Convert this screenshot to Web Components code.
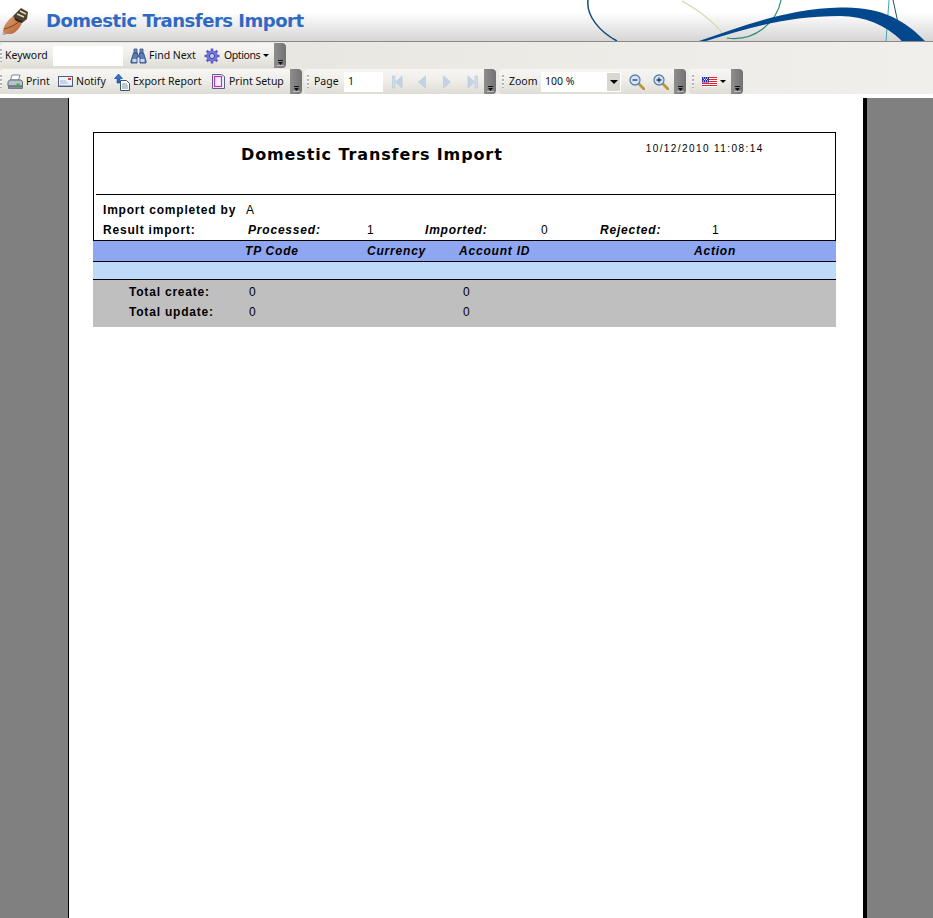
<!DOCTYPE html>
<html><head><meta charset="utf-8">
<style>
html,body{margin:0;padding:0;height:100%;overflow:hidden;background:#fff}
body{display:flex;flex-direction:column;height:918px;font-family:"Noto Sans","Liberation Sans",sans-serif}
</style></head><body>
<app-banner>Domestic Transfers Import</app-banner>
<tool-panel>
  <tool-row>
    <tool-strip grip style="--dx:0px">
      <tb-label style="margin-left:5px;width:48px">Keyword</tb-label>
      <tb-input style="width:70px"></tb-input>
      <tb-button icon="bino" style="margin-left:7px;width:74px;--gap:2px">Find Next</tb-button>
      <tb-button icon="gear" menu style="width:70px;--gap:4px;--cm:-1px;--ls:-.4px">Options</tb-button>
    </tool-strip>
  </tool-row>
  <tool-row>
    <tool-strip grip style="--dx:0px">
      <tb-button icon="printer" style="margin-left:7px;width:51px;--gap:3px">Print</tb-button>
      <tb-button icon="notify" style="width:56px;--gap:3px">Notify</tb-button>
      <tb-button icon="export" style="width:98px;--gap:2px">Export Report</tb-button>
      <tb-button icon="setup" style="width:78px;--gap:4px">Print Setup</tb-button>
    </tool-strip>
    <tool-strip grip style="margin-left:2px">
      <tb-label style="margin-left:10px;width:30px">Page</tb-label>
      <tb-input value="1" style="width:39px"></tb-input>
      <tb-button icon="first" style="margin-left:9px;width:26px"></tb-button>
      <tb-button icon="prev" style="width:25px"></tb-button>
      <tb-button icon="next" style="width:24px"></tb-button>
      <tb-button icon="last" style="width:17px"></tb-button>
    </tool-strip>
    <tool-strip grip style="margin-left:3px">
      <tb-label style="margin-left:10px;width:32px">Zoom</tb-label>
      <tb-select value="100 %" style="width:80px"></tb-select>
      <tb-button icon="zoomout" style="margin-left:8px;width:24px"></tb-button>
      <tb-button icon="zoomin" style="width:21px"></tb-button>
    </tool-strip>
    <tool-strip grip style="margin-left:3px">
      <tb-button icon="flag" menu style="margin-left:13px;width:29px;--gap:4px;--cm:-1px"></tb-button>
    </tool-strip>
  </tool-row>
</tool-panel>
<report-viewer>
  <report-doc></report-doc>
</report-viewer>

<script>
const ICONS={
bino:`<svg width="17" height="16" viewBox="0 0 17 16"><path d="M4 1h3v4H4zM10 1h3v4h-3z" fill="#6f86b8" stroke="#33507f" stroke-width=".8"/><path d="M3.500 5h4v2h2V5h4l2.500 8v2h-6V9h-3v6h-6v-2z" fill="#5f7db8" stroke="#2c4a80" stroke-width=".9"/><path d="M2.500 11h4v3h-4zM10.500 11h4v3h-4z" fill="#c8d6ee"/></svg>`,
gear:`<svg width="16" height="16" viewBox="0 0 16 16"><g fill="#5c5fc4"><circle cx="8" cy="8" r="5.600"/><g stroke="#5c5fc4" stroke-width="2.600"><path d="M8 .5v15M.5 8h15M2.700 2.700l10.600 10.600M13.300 2.700L2.700 13.300"/></g></g><circle cx="8" cy="8" r="5" fill="#7478d8"/><circle cx="8" cy="8" r="2.600" fill="#c6c8f0" stroke="#3f41a0"/></svg>`,
printer:`<svg width="16" height="16" viewBox="0 0 16 16"><path d="M5 1h8l-1.500 5h-8z" fill="#fff" stroke="#6b7a8a" stroke-width=".9"/><path d="M1 7.500L3 6h11l1.500 1.500V12H1z" fill="#b9c2cc" stroke="#566573" stroke-width=".9"/><path d="M1.500 12h14v2.500h-14z" fill="#7f8d9b" stroke="#4a5866" stroke-width=".6"/><rect x="9.500" y="9.500" width="3" height="2" fill="#1ec81e"/></svg>`,
notify:`<svg width="15" height="12" viewBox="0 0 15 12"><rect x=".5" y=".5" width="14" height="10" fill="#eef2f9" stroke="#4d5f88"/><rect x="10" y="2" width="3" height="2" fill="#e03a2e"/><path d="M2 5h6M2 7h8" stroke="#a3b2cc"/><path d="M1 9.500h13" stroke="#9fb2d4"/></svg>`,
export:`<svg width="17" height="18" viewBox="0 0 17 18"><path d="M4.500 1L8.500 5.500H6V10H3V5.500H.5z" fill="#2a72d8" stroke="#123f88" stroke-width=".6"/><path d="M6.500 7.500h6l3 3v7h-9z" fill="#fff" stroke="#3d5273"/><path d="M8 11h5M8 13h6M8 15h6" stroke="#7d8ea8"/></svg>`,
setup:`<svg width="13" height="15" viewBox="0 0 13 15"><path d="M.5.5h9l3 2v12H.5z" fill="#f4f4ff" stroke="#5b5e8a"/><rect x="2.500" y="2.500" width="7" height="10" fill="none" stroke="#c22fb8" stroke-width="1.200"/></svg>`,
first:`<svg width="11" height="14" viewBox="0 0 11 14"><rect x=".5" y="1" width="2.500" height="12" fill="#cfdbe9" stroke="#b5c8dc" stroke-width=".6"/><path d="M10 1v12L3.500 7z" fill="#c3d3e4" stroke="#b5c8dc" stroke-width=".6"/></svg>`,
prev:`<svg width="8" height="14" viewBox="0 0 8 14"><path d="M7.500 1v12L.5 7z" fill="#c3d3e4" stroke="#b5c8dc" stroke-width=".6"/></svg>`,
next:`<svg width="8" height="14" viewBox="0 0 8 14"><path d="M.5 1v12L7.500 7z" fill="#c3d3e4" stroke="#b5c8dc" stroke-width=".6"/></svg>`,
last:`<svg width="11" height="14" viewBox="0 0 11 14"><rect x="8" y="1" width="2.500" height="12" fill="#cfdbe9" stroke="#b5c8dc" stroke-width=".6"/><path d="M1 1v12L7.500 7z" fill="#c3d3e4" stroke="#b5c8dc" stroke-width=".6"/></svg>`,
zoomout:`<svg width="16" height="16" viewBox="0 0 16 16"><path d="M9.500 9.500L15 15" stroke="#b8953a" stroke-width="2.600" stroke-linecap="round"/><circle cx="6" cy="6" r="5" fill="#d7e6f5" stroke="#5a80ac" stroke-width="1.300"/><path d="M3.500 6h5" stroke="#1d3a66" stroke-width="1.300"/></svg>`,
zoomin:`<svg width="16" height="16" viewBox="0 0 16 16"><path d="M9.500 9.500L15 15" stroke="#b8953a" stroke-width="2.600" stroke-linecap="round"/><circle cx="6" cy="6" r="5" fill="#d7e6f5" stroke="#5a80ac" stroke-width="1.300"/><path d="M3.500 6h5M6 3.500v5" stroke="#1d3a66" stroke-width="1.300"/></svg>`,
flag:`<svg width="15" height="10" viewBox="0 0 15 10"><rect width="15" height="10" fill="#fff"/><path d="M0 .5h15M0 2.500h15M0 4.500h15M0 6.500h15M0 8.500h15" stroke="#e8202a"/><rect width="7" height="5.500" fill="#2a2fa8"/><path d="M1 1h1M3 1h1M5 1h1M2 2.500h1M4 2.500h1M1 4h1M3 4h1M5 4h1" stroke="#fff"/></svg>`
};
function def(name,html){
  customElements.define(name,class extends HTMLElement{
    connectedCallback(){
      if(this.shadowRoot)return;
      const r=this.attachShadow({mode:'open'});
      r.innerHTML=typeof html==='function'?html(this):html;
    }
  });
}
def('app-banner',`<style>
:host{display:flex;flex:none;height:41px;align-items:center;position:relative;overflow:hidden;background:linear-gradient(#fff 0,#fff 12px,#d6d6d6 100%);border-bottom:1px solid #8a8a8a}
.logo{flex:none;margin-left:1px;width:29px;height:29px;align-self:flex-start;margin-top:7px}
.t{margin-left:16px;font:bold 18px/24px "DejaVu Sans",sans-serif;color:#2f69c3;letter-spacing:-.48px;white-space:nowrap;margin-top:1px}
.art{position:absolute;left:560px;top:0}
</style>
<svg class="logo" viewBox="0 0 29 29">
<defs><linearGradient id="h" x1="0" y1="0" x2="1" y2="1"><stop offset="0" stop-color="#e0a078"/><stop offset="1" stop-color="#b4602f"/></linearGradient></defs>
<path d="M2 25C2 19 6 14 12 9L21 15C20 20 15 26 10 27L4 27z" fill="url(#h)"/>
<path d="M3 22C8 21 14 18 19 14" stroke="#7d4322" fill="none"/>
<path d="M12 9L20 1l7 4-1 7-5 4-6-2z" fill="#4c4030"/>
<path d="M16 7l7 3M19 4l6 3" stroke="#e0d6b8" stroke-width="1.600"/>
<path d="M14 12l7 3" stroke="#2a2118" stroke-width="1.500"/>
<path d="M2 24l-.5 4 4-.5z" fill="#a8a8b4"/></svg>
<div class="t"><slot></slot></div>
<svg class="art" width="373" height="41" viewBox="0 0 373 41">
<g fill="none">
<path d="M28 0C26 16 40 32 57 41" stroke="#134c78" stroke-width="1.500"/>
<path d="M122 1C140 11 158 25 168 41" stroke="#cfdca6" stroke-width="1.200"/>
<path d="M221 0C217 22 195 42 167 38" stroke="#2e8a72" stroke-width="1.200"/>
<path d="M329 0L326 41" stroke="#3ca3bd" stroke-width="1"/>
<path d="M333 0L342 41" stroke="#27506e" stroke-width="1"/>
</g>
<path d="M139 41C180 27 225 9 280 7.500C320 6 345 20 365 41H342C325 25 305 16 280 16C225 16 185 29 146 41z" fill="#03488d"/>
</svg>`);
def('tool-panel',`<style>:host{display:flex;flex-direction:column;flex:none;height:52px;background:linear-gradient(90deg,#e4e2db,#ecebe6 60%,#f0efec);gap:1px;padding-top:1px;box-sizing:border-box}</style><slot></slot>`);
def('tool-row',`<style>:host{display:flex;height:25px}</style><slot></slot>`);
def('tool-strip',`<style>
:host{display:flex;align-items:center;height:25px;background:linear-gradient(#f7f6f4,#efeeea 45%,#dedcd5);border-radius:4px 0 0 4px;position:relative;padding-right:12px;color:#111}
.dots{position:absolute;left:var(--dx,3px);top:6px;width:2px;height:13px;background:repeating-linear-gradient(#b4b4b4 0 2px,#fff 2px 3px,transparent 3px 4px)}
.end{position:absolute;right:0;top:0;bottom:0;width:12px;background:linear-gradient(90deg,#8e8e8e,#727272);border-radius:0 4px 4px 0}
.end svg{position:absolute;left:3px;bottom:2px}
</style>
<div class="dots"></div><slot></slot>
<div class="end"><svg width="7" height="6" viewBox="0 0 7 6"><path d="M1 .5h5" stroke="#111"/><path d="M1 2h5L3.500 5z" fill="#111"/><path d="M0 5.500h7" stroke="#fff" opacity=".5"/></svg></div>`);
def('tb-label',`<style>:host{display:block;flex:none;font:10.500px/16px "Noto Sans",sans-serif;color:#111;white-space:nowrap;margin-bottom:2px}</style><slot></slot>`);
def('tb-input',h=>`<style>:host{display:block;flex:none;height:20px;background:#fff;box-sizing:border-box;padding-left:4px;font:10.500px/19px "Noto Sans",sans-serif;color:#111}</style>${h.getAttribute('value')||''}`);
def('tb-select',h=>`<style>:host{display:flex;flex:none;height:20px;background:#fff;box-sizing:border-box;border:1px solid #fff;padding-left:3px;font:10.500px/17px "Noto Sans",sans-serif;color:#111;justify-content:space-between}
.b{width:13px;background:#d8d7d0;display:flex;align-items:center;justify-content:center}.b i{border:4px solid transparent;border-top:4px solid #000;border-bottom:0;width:0;height:0}</style><span>${h.getAttribute('value')}</span><span class="b"><i></i></span>`);
def('tb-button',h=>`<style>:host{display:flex;flex:none;align-items:center;height:25px;font:10.500px "Noto Sans",sans-serif;color:#111;white-space:nowrap;gap:var(--gap,3px)}
svg{display:block;flex:none}
.x{margin-bottom:2px;letter-spacing:var(--ls,0)}
.c{width:0;height:0;border:3px solid transparent;border-top:3px solid #000;border-bottom:0;margin-left:var(--cm,0)}</style>${ICONS[h.getAttribute('icon')]||''}${h.textContent.trim()?'<span class="x"><slot></slot></span>':''}${h.hasAttribute('menu')?'<i class="c"></i>':''}`);
def('report-viewer',`<style>:host{display:flex;flex:1;min-height:0;margin-top:4px;background:#808080;padding-left:68px}
.page{background:#fff;border-left:1px solid #000;border-right:4px solid #000;padding:34px 0 0 24px;box-sizing:border-box;width:799px}</style><div class="page"><slot></slot></div>`);
def('report-doc',`<style>
:host{display:block;width:743px;font:bold 12px/16px "Liberation Sans",sans-serif;color:#000;letter-spacing:.8px}
.top{height:62px;border:1px solid #000;border-bottom:0;box-sizing:border-box;display:flex;align-items:flex-start}
.title{margin:12px 0 0 147px;font:bold 16px/20px "DejaVu Sans",sans-serif;letter-spacing:.88px;white-space:nowrap}
.date{margin:9px 0 0 143px;font:normal 10px/14px "Liberation Sans",sans-serif;letter-spacing:1.42px;white-space:nowrap}
.info{border:1px solid #000;border-width:0 1px;height:46px;box-sizing:border-box;padding-top:8px}
.info:before{content:"";display:block;height:1px;background:#000;margin:-8px 0 5px 2px}
.r{display:grid;align-items:center;white-space:nowrap}
.n{font-weight:normal}.i{font-style:italic}
.r1{grid-template-columns:143px 1fr;padding-left:9px;height:20px}
.r2{grid-template-columns:145px 119px 58px 116px 59px 112px 1fr;padding-left:9px;height:19px}
.hd{background:#8fa6f0;border:solid #000;border-width:1px 0;box-sizing:border-box;grid-template-columns:152px 122px 92px 235px 1fr;font-style:italic;height:22px}
.band{height:17px;background:#bddaf8;border-bottom:1px solid #000}
.tot{background:#bfbfbf;height:47px;padding-top:2px;box-sizing:border-box}
.t{grid-template-columns:120px 214px 1fr;padding-left:36px;height:20px}
</style>
<div class="top"><div class="title">Domestic Transfers Import</div><div class="date">10/12/2010 11:08:14</div></div>
<div class="info">
 <div class="r r1"><span>Import completed by</span><span class="n">A</span></div>
 <div class="r r2"><span>Result import:</span><span class="i">Processed:</span><span class="n">1</span><span class="i">Imported:</span><span class="n">0</span><span class="i">Rejected:</span><span class="n">1</span></div>
</div>
<div class="r hd"><span></span><span>TP Code</span><span>Currency</span><span>Account ID</span><span>Action</span></div>
<div class="band"></div>
<div class="tot">
 <div class="r t"><span>Total create:</span><span class="n">0</span><span class="n">0</span></div>
 <div class="r t"><span>Total update:</span><span class="n">0</span><span class="n">0</span></div>
</div>`);
</script>
</body></html>
